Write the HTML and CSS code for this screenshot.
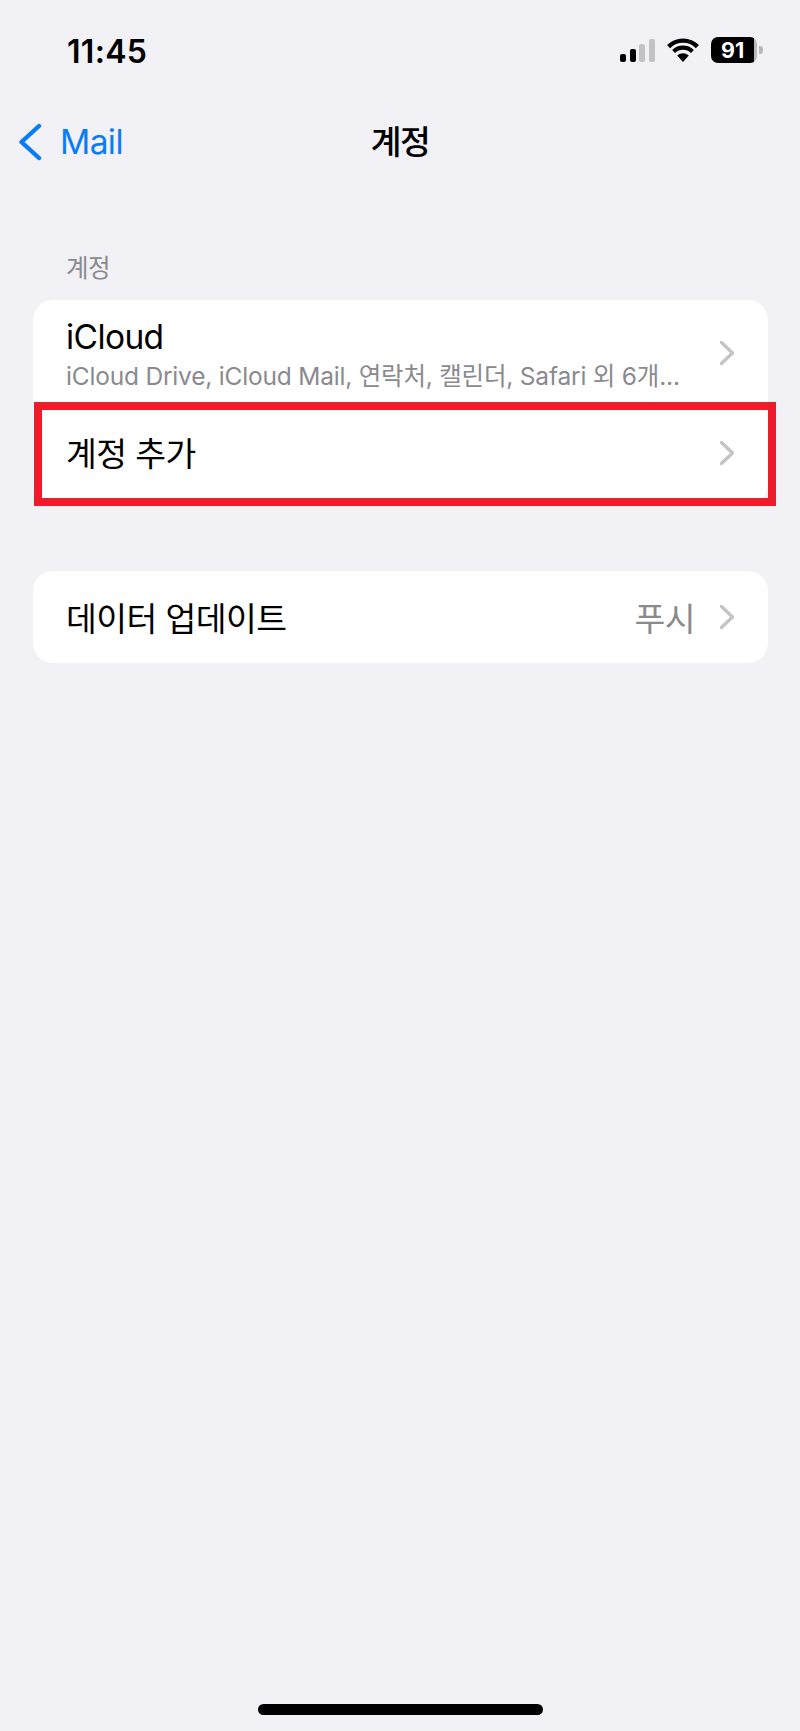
FILE: index.html
```
<!DOCTYPE html>
<html lang="ko">
<head>
<meta charset="utf-8">
<title>계정</title>
<link rel="stylesheet" href="styles.css">
</head>
<body>
<div class="screen">
  <header class="status">
    <span class="time">11:45</span>
    <div class="indicators">
      <div class="signal"><i class="b1"></i><i class="b2"></i><i class="b3 off"></i><i class="b4 off"></i></div>
      <svg class="wifi" viewBox="0 0 32 24" width="32" height="24"><path d="M16 24L10.2 17.6A8.4 8.4 0 0 1 21.8 17.6Z" fill="#000"/><path d="M6.6 13.4A13.6 13.6 0 0 1 25.4 13.4" fill="none" stroke="#000" stroke-width="4.2"/><path d="M1.6 8.6A20.4 20.4 0 0 1 30.4 8.6" fill="none" stroke="#000" stroke-width="4.4"/></svg>
      <div class="battery"><div class="cell"><span class="level">91</span></div><i class="nub"></i></div>
    </div>
  </header>
  <nav class="nav">
    <a class="back"><svg class="back-icon" viewBox="0 0 24 38" width="24" height="38"><path d="M21 3L3.5 19L21 35" fill="none" stroke="#0a7cf5" stroke-width="4.4" stroke-linecap="round" stroke-linejoin="round"/></svg><span>Mail</span></a>
    <h1 class="title">계정</h1>
    <span></span>
  </nav>
  <main class="content">
    <div class="section-label">계정</div>
    <section class="card">
      <div class="row row-tall">
        <div class="stack">
          <div class="main-text">iCloud</div>
          <div class="sub-text">iCloud Drive, iCloud Mail, 연락처, 캘린더, Safari 외 6개...</div>
        </div>
        <svg class="chev" viewBox="0 0 16 26" width="16" height="26"><path d="M2.5 2.5L13.5 13L2.5 23.5" fill="none" stroke="#c4c4c7" stroke-width="3.4" stroke-linecap="round" stroke-linejoin="round"/></svg>
      </div>
      <div class="row row-add">
        <div class="main-text">계정 추가</div>
        <svg class="chev" viewBox="0 0 16 26" width="16" height="26"><path d="M2.5 2.5L13.5 13L2.5 23.5" fill="none" stroke="#c4c4c7" stroke-width="3.4" stroke-linecap="round" stroke-linejoin="round"/></svg>
        <div class="highlight"></div>
      </div>
    </section>
    <section class="card card-second">
      <div class="row row-data">
        <div class="main-text">데이터 업데이트</div>
        <div class="value">푸시</div>
        <svg class="chev" viewBox="0 0 16 26" width="16" height="26"><path d="M2.5 2.5L13.5 13L2.5 23.5" fill="none" stroke="#c4c4c7" stroke-width="3.4" stroke-linecap="round" stroke-linejoin="round"/></svg>
      </div>
    </section>
  </main>
  <div class="home"><div class="home-bar"></div></div>
</div>
</body>
</html>
```
FILE: styles.css
```
* { box-sizing: border-box; }
html, body { margin: 0; padding: 0; }
body {
  background: #f1f1f6;
  color: #000;
  font-family: Inter, "Noto Sans CJK KR", sans-serif;
}
.screen {
  width: 800px;
  height: 1731px;
  display: flex;
  flex-direction: column;
  overflow: hidden;
}
.status {
  height: 100px;
  padding: 34px 37px 0 67px;
  display: flex;
  justify-content: space-between;
  align-items: flex-start;
}
.time {
  font-size: 32px;
  font-weight: 600;
  line-height: 36px;
  letter-spacing: 0.3px;
}
.indicators {
  display: flex;
  align-items: flex-end;
  height: 26px;
  margin-top: 3px;
}
.signal {
  display: flex;
  align-items: flex-end;
  gap: 3.6px;
  height: 23px;
  margin-bottom: 1px;
}
.signal i {
  display: block;
  width: 6px;
  border-radius: 2px;
  background: #000;
}
.signal .off { background: #c2c2c6; }
.b1 { height: 8px; }
.b2 { height: 13px; }
.b3 { height: 18px; }
.b4 { height: 23px; }
.wifi { margin: 0 12px 1px 12px; }
.battery {
  display: flex;
  align-items: center;
  height: 26px;
}
.cell {
  width: 46px;
  height: 26px;
  border-radius: 7px;
  background: linear-gradient(to right, #000 0, #000 43px, #b9b9bd 43px);
  display: flex;
  align-items: center;
  padding-left: 10px;
}
.level {
  color: #fff;
  font-size: 21.5px;
  font-weight: 700;
  line-height: 26px;
}
.nub {
  display: block;
  width: 4px;
  height: 8px;
  margin-left: 2px;
  border-radius: 0 3px 3px 0;
  background: #b9b9bd;
}
.nav {
  height: 50px;
  margin-top: 17px;
  padding-left: 18px;
  display: grid;
  grid-template-columns: 1fr auto 1fr;
  align-items: center;
}
.back {
  display: flex;
  align-items: center;
  gap: 18px;
  color: #0a7cf5;
  font-size: 33.5px;
  line-height: 40px;
  letter-spacing: -0.6px;
}
.back-icon { flex: none; }
.title {
  margin: 0 18px 0 0;
  font-size: 33.5px;
  font-weight: 500;
  line-height: 44px;
  letter-spacing: -1.5px;
}
.content { padding: 0 32px 0 33px; flex: 1; }
.section-label {
  margin: 86px 0 0 33px;
  height: 30px;
  color: #8a8a8e;
  font-size: 24.5px;
  line-height: 30px;
  letter-spacing: -0.6px;
}
.card {
  margin-top: 17px;
  border-radius: 20px;
  background: #fff;
}
.card-second { margin-top: 67px; }
.row {
  position: relative;
  display: flex;
  align-items: center;
  padding: 0 33px;
}
.row-tall { height: 102px; }
.row-tall .chev { margin-top: 4px; }
.row-add { height: 102px; }
.row-add .main-text { padding-top: 2px; }
.row-data { height: 92px; }
.row-data .main-text, .row-data .value { padding-top: 4px; }
.stack { flex: 1; min-width: 0; padding-top: 6px; }
.main-text {
  flex: 1;
  font-size: 33.5px;
  line-height: 40px;
  letter-spacing: -0.6px;
}
.sub-text {
  margin-top: 4px;
  color: #8a8a8e;
  font-size: 24.5px;
  line-height: 30px;
  letter-spacing: -0.2px;
  white-space: nowrap;
}
.value {
  color: #8a8a8e;
  font-size: 33.5px;
  line-height: 40px;
  letter-spacing: -0.6px;
  margin-right: 24px;
}
.chev { flex: none; }
.highlight {
  position: absolute;
  left: 1px;
  right: -8px;
  top: 0;
  bottom: -2px;
  border: 8px solid #ed1c2b;
}
.home {
  padding-bottom: 16px;
  display: flex;
  justify-content: center;
}
.home-bar {
  width: 285px;
  height: 11px;
  border-radius: 6px;
  background: #000;
}
```
